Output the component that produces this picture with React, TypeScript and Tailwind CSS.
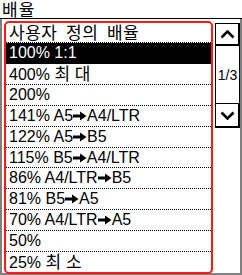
import React from "react";

const Arrow = () => (
  <svg width="14" height="10" viewBox="0 0 14 10" className="inline-block align-[0px]">
    <rect x="0" y="3.5" width="8.5" height="3" fill="currentColor" />
    <polygon points="7,0.5 13.5,5 7,9.5" fill="currentColor" />
  </svg>
);

const K = ({ children }: { children: React.ReactNode }) => (
  <span className="text-[17px] tracking-[0.5px]" style={{ fontFamily: '"Noto Sans CJK KR", sans-serif' }}>
    {children}
  </span>
);

type Row = { content: React.ReactNode; selected?: boolean };

const rows: Row[] = [
  { content: <K>사용자&nbsp; 정의&nbsp; 배율</K> },
  { content: <>100% 1:1</>, selected: true },
  { content: <>400% <K>최 대</K></> },
  { content: <>200%</> },
  { content: <>141% A5<Arrow />A4/LTR</> },
  { content: <>122% A5<Arrow />B5</> },
  { content: <>115% B5<Arrow />A4/LTR</> },
  { content: <>86% A4/LTR<Arrow />B5</> },
  { content: <>81% B5<Arrow />A5</> },
  { content: <>70% A4/LTR<Arrow />A5</> },
  { content: <>50%</> },
  { content: <>25% <K>최 소</K></> },
];

export default function App() {
  return (
    <div
      className="w-[242px] h-[275px] bg-white overflow-hidden text-black"
      style={{ fontFamily: '"Liberation Sans", "Noto Sans CJK KR", sans-serif' }}
    >
      <div className="h-[19px] border-b border-black pl-[2px]">
        <div
          className="text-[17px] leading-[18px] tracking-[1px]"
          style={{ fontFamily: '"Noto Sans CJK KR", sans-serif' }}
        >
          배율
        </div>
      </div>
      <div className="h-[256px] border-l-2 border-r-2 border-b-2 border-[#808080] flex">
        <div className="ml-[2px] mt-[2px] w-[209px] h-[253px] border-2 border-[#ff1a1a] rounded-[5px] flex flex-col">
          {rows.map((r, i) => (
            <div
              key={i}
              className={`${i === 0 || i === rows.length - 1 ? "h-[20px]" : "h-[21px]"} ${
                i < rows.length - 1 ? "border-b border-dotted border-black" : ""
              } ${r.selected ? "bg-black text-white" : ""} flex items-center pl-[3px] text-[16px] leading-[18px] whitespace-nowrap`}
            >
              <span>{r.content}</span>
            </div>
          ))}
        </div>
        <div className="ml-[2px] mt-[4px] w-[25px] flex flex-col">
          <div className="h-[23px] border border-black border-r-2 border-b-2 flex items-center justify-center">
            <svg width="15" height="9" viewBox="0 0 15 9">
              <polyline points="1.5,7.5 7.5,1.5 13.5,7.5" fill="none" stroke="#000" strokeWidth="2.6" />
            </svg>
          </div>
          <div className="h-[57px] border-l border-r border-black flex items-center justify-center">
            <span className="text-[14px] leading-none">1/3</span>
          </div>
          <div className="h-[25px] border border-black border-r-2 border-b-2 flex items-center justify-center">
            <svg width="15" height="9" viewBox="0 0 15 9">
              <polyline points="1.5,1.5 7.5,7.5 13.5,1.5" fill="none" stroke="#000" strokeWidth="2.6" />
            </svg>
          </div>
        </div>
      </div>
    </div>
  );
}
